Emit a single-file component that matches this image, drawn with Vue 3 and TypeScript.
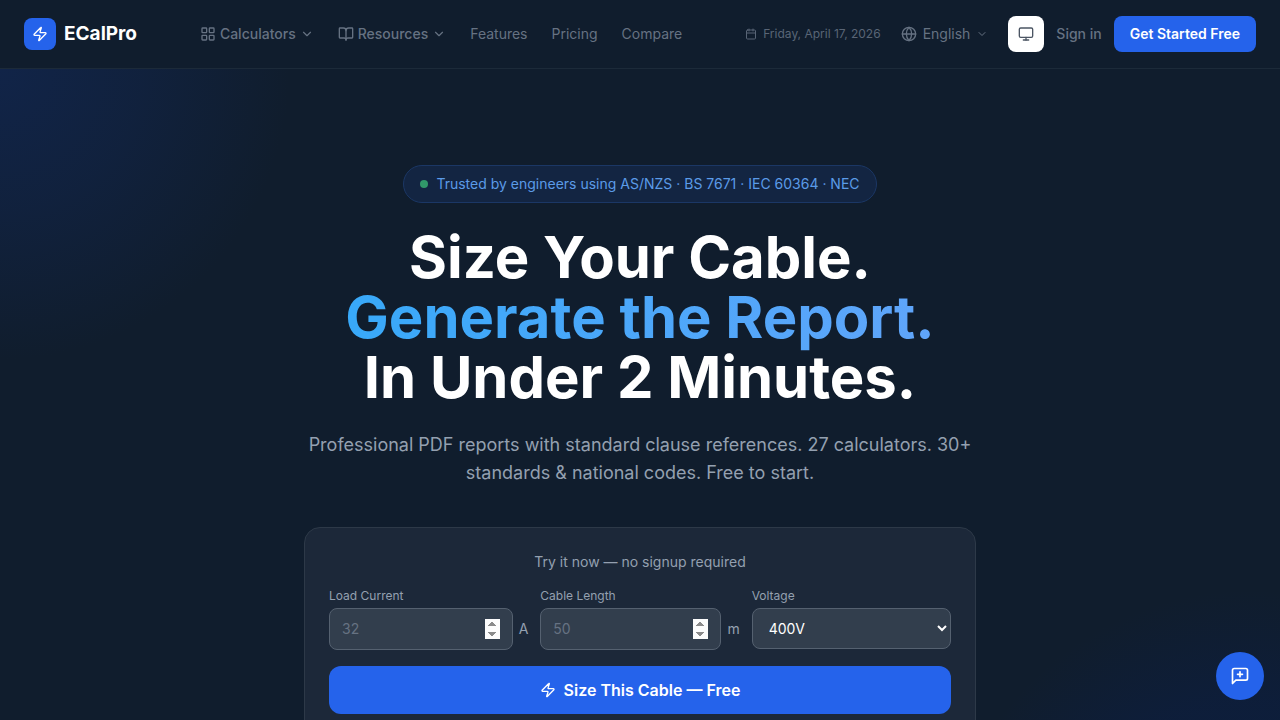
<script setup lang="ts">
import { ref } from 'vue'

const current = ref<number | null>(null)
const cableLength = ref<number | null>(null)
const voltage = ref('400V')
const voltages: string[] = ['230V', '400V', '690V']
const links: string[] = ['Features', 'Pricing', 'Compare']
</script>

<template>
  <div class="page">
    <header class="bar">
      <a class="brand" href="#">
        <span class="brand-mark">
          <svg class="icon s16" viewBox="0 0 24 24"><path d="M4 14a1 1 0 0 1-.78-1.63l9.9-10.2a.5.5 0 0 1 .86.46l-1.92 6.02A1 1 0 0 0 13 10h7a1 1 0 0 1 .78 1.63l-9.9 10.2a.5.5 0 0 1-.86-.46l1.92-6.02A1 1 0 0 0 11 14z" /></svg>
        </span>
        <span class="brand-name">ECalPro</span>
      </a>

      <nav class="menu">
        <button class="menu-item strong" type="button">
          <svg class="icon s16" viewBox="0 0 24 24"><rect x="3" y="3" width="7" height="7" rx="1" /><rect x="14" y="3" width="7" height="7" rx="1" /><rect x="14" y="14" width="7" height="7" rx="1" /><rect x="3" y="14" width="7" height="7" rx="1" /></svg>
          Calculators
          <svg class="icon s14" viewBox="0 0 24 24"><path d="m6 9 6 6 6-6" /></svg>
        </button>
        <button class="menu-item strong" type="button">
          <svg class="icon s16" viewBox="0 0 24 24"><path d="M12 7v14" /><path d="M3 18a1 1 0 0 1-1-1V4a1 1 0 0 1 1-1h5a4 4 0 0 1 4 4 4 4 0 0 1 4-4h5a1 1 0 0 1 1 1v13a1 1 0 0 1-1 1h-6a3 3 0 0 0-3 3 3 3 0 0 0-3-3z" /></svg>
          Resources
          <svg class="icon s14" viewBox="0 0 24 24"><path d="m6 9 6 6 6-6" /></svg>
        </button>
        <a v-for="link in links" :key="link" class="menu-item" href="#">{{ link }}</a>
      </nav>

      <div class="actions">
        <span class="date">
          <svg class="icon s12" viewBox="0 0 24 24"><path d="M8 2v4" /><path d="M16 2v4" /><rect x="3" y="4" width="18" height="18" rx="2" /><path d="M3 10h18" /></svg>
          Friday, April 17, 2026
        </span>
        <button class="language" type="button">
          <svg class="icon s16" viewBox="0 0 24 24"><circle cx="12" cy="12" r="10" /><path d="M12 2a14.5 14.5 0 0 0 0 20 14.5 14.5 0 0 0 0-20" /><path d="M2 12h20" /></svg>
          English
          <svg class="icon s12" viewBox="0 0 24 24"><path d="m6 9 6 6 6-6" /></svg>
        </button>
        <div class="account">
          <button class="theme" type="button" aria-label="Theme">
            <svg class="icon s16" viewBox="0 0 24 24"><rect x="2" y="3" width="20" height="14" rx="2" /><path d="M8 21h8" /><path d="M12 17v4" /></svg>
          </button>
          <a class="sign-in" href="#">Sign in</a>
          <a class="start" href="#">Get Started Free</a>
        </div>
      </div>
    </header>

    <main class="hero">
      <p class="badge"><span class="dot"></span>Trusted by engineers using AS/NZS · BS 7671 · IEC 60364 · NEC</p>
      <h1 class="title">
        Size Your Cable.<br />
        <span class="accent">Generate the Report.</span><br />
        In Under 2 Minutes.
      </h1>
      <p class="lead">Professional PDF reports with standard clause references. 27 calculators. 30+ standards &amp; national codes. Free to start.</p>

      <form class="card" @submit.prevent>
        <p class="card-note">Try it now — no signup required</p>
        <div class="fields">
          <div class="field">
            <label for="current">Load Current</label>
            <div class="control">
              <input id="current" v-model="current" type="number" placeholder="32" />
              <span class="unit">A</span>
            </div>
          </div>
          <div class="field">
            <label for="length">Cable Length</label>
            <div class="control">
              <input id="length" v-model="cableLength" type="number" placeholder="50" />
              <span class="unit">m</span>
            </div>
          </div>
          <div class="field">
            <label for="voltage">Voltage</label>
            <select id="voltage" v-model="voltage">
              <option v-for="v in voltages" :key="v" :value="v">{{ v }}</option>
            </select>
          </div>
        </div>
        <button class="submit" type="submit">
          <svg class="icon s16" viewBox="0 0 24 24"><path d="M4 14a1 1 0 0 1-.78-1.63l9.9-10.2a.5.5 0 0 1 .86.46l-1.92 6.02A1 1 0 0 0 13 10h7a1 1 0 0 1 .78 1.63l-9.9 10.2a.5.5 0 0 1-.86-.46l1.92-6.02A1 1 0 0 0 11 14z" /></svg>
          Size This Cable — Free
        </button>
      </form>
    </main>

    <button class="feedback" type="button" aria-label="Send feedback">
      <svg class="icon s20" viewBox="0 0 24 24"><path d="M21 15a2 2 0 0 1-2 2H7l-4 4V5a2 2 0 0 1 2-2h14a2 2 0 0 1 2 2z" /><path d="M12 7v6" /><path d="M9 10h6" /></svg>
    </button>
  </div>
</template>

<style>
body {
  background: #101d2d;
}
</style>

<style scoped>
.page {
  min-height: 100vh;
  font-family: Inter, "Liberation Sans", sans-serif;
  font-size: 14px;
  line-height: 20px;
  color: #fff;
  background:
    radial-gradient(circle at 0 70px, #112448 0, #11244899 140px, #11244800 290px),
    radial-gradient(circle at 1250px 900px, #0c1e42 0, #0c1e4299 200px, #0c1e4200 310px),
    #101d2d;
  background-attachment: fixed;
}
.page *,
.page {
  box-sizing: border-box;
}
button,
input,
select {
  font: inherit;
  color: inherit;
}
button {
  border: 0;
  padding: 0;
  background: none;
  cursor: pointer;
}
a {
  color: inherit;
  text-decoration: none;
}
p,
h1 {
  margin: 0;
}
.icon {
  flex: none;
  fill: none;
  stroke: currentColor;
  stroke-width: 2;
  stroke-linecap: round;
  stroke-linejoin: round;
}
.s12 { width: 12px; height: 12px; }
.s14 { width: 14px; height: 14px; }
.s16 { width: 16px; height: 16px; }
.s20 { width: 20px; height: 20px; }

.bar {
  position: sticky;
  top: 0;
  z-index: 2;
  display: flex;
  align-items: center;
  justify-content: space-between;
  padding: 16px 24px;
  background: #101d2d;
  border-bottom: 1px solid #1c2a39;
  color: #667282;
  white-space: nowrap;
}
.brand {
  display: flex;
  align-items: center;
  gap: 8px;
  color: #fff;
}
.brand-mark {
  display: grid;
  place-items: center;
  width: 32px;
  height: 32px;
  border-radius: 8px;
  background: #2563eb;
}
.brand-name {
  font-size: 19px;
  line-height: 32px;
  font-weight: 700;
}
.menu {
  display: flex;
  align-items: center;
  gap: 24px;
}
.menu-item {
  display: flex;
  align-items: center;
  gap: 4px;
}
.strong {
  font-weight: 500;
}
.actions {
  display: flex;
  align-items: center;
  gap: 20px;
}
.date {
  display: flex;
  align-items: center;
  gap: 6px;
  font-size: 12px;
  color: #596576;
}
.language {
  display: flex;
  align-items: center;
  gap: 6px;
}
.account {
  display: flex;
  align-items: center;
  gap: 12px;
}
.theme {
  display: grid;
  place-items: center;
  width: 36px;
  height: 36px;
  border-radius: 8px;
  background: #fff;
  color: #4b5563;
}
.sign-in {
  font-weight: 500;
}
.start {
  padding: 8px 16px;
  border-radius: 8px;
  background: #2563eb;
  color: #fff;
  font-weight: 600;
}

.hero {
  display: flex;
  flex-direction: column;
  align-items: center;
  padding: 96px 24px;
  text-align: center;
}
.badge {
  display: flex;
  align-items: center;
  gap: 8px;
  padding: 8px 16px;
  border: 1px solid #1b3765;
  border-radius: 20px;
  background: #132542;
  color: #5b9be8;
}
.dot {
  width: 8px;
  height: 8px;
  border-radius: 50%;
  background: #31986a;
}
.title {
  margin-top: 24px;
  font-size: 58px;
  line-height: 60px;
  font-weight: 700;
}
.accent {
  background: linear-gradient(90deg, #38a9f9, #60a5fa);
  background-clip: text;
  -webkit-background-clip: text;
  color: transparent;
}
.lead {
  max-width: 672px;
  margin-top: 24px;
  font-size: 18px;
  line-height: 28px;
  color: #94a0b0;
}
.card {
  width: 100%;
  max-width: 672px;
  margin-top: 40px;
  padding: 24px;
  border: 1px solid #2d3948;
  border-radius: 16px;
  background: #1c2839;
}
.card-note {
  color: #94a0b0;
}
.fields {
  display: grid;
  grid-template-columns: repeat(3, minmax(0, 1fr));
  gap: 12px;
  margin: 16px 0;
  text-align: left;
}
.field label {
  display: block;
  margin-bottom: 4px;
  font-size: 12px;
  line-height: 16px;
  color: #94a0b0;
}
.control {
  display: flex;
  align-items: center;
  gap: 6px;
}
input,
select {
  border: 1px solid #556170;
  border-radius: 8px;
  background: #323e4d;
  outline: none;
}
input {
  flex: 1;
  min-width: 0;
  padding: 10px 12px;
}
input::placeholder {
  color: #667282;
}
input::-webkit-inner-spin-button {
  height: 20px;
  opacity: 1;
}
select {
  display: block;
  width: 100%;
  height: 41px;
  padding: 10px 12px;
}
.unit {
  color: #94a0b0;
}
.submit {
  display: flex;
  align-items: center;
  justify-content: center;
  gap: 8px;
  width: 100%;
  padding: 12px 24px;
  border-radius: 12px;
  background: #2563eb;
  font-size: 16px;
  line-height: 24px;
  font-weight: 600;
}
.feedback {
  position: fixed;
  right: 16px;
  bottom: 20px;
  z-index: 3;
  display: grid;
  place-items: center;
  width: 48px;
  height: 48px;
  border-radius: 50%;
  background: #2563eb;
}
</style>
